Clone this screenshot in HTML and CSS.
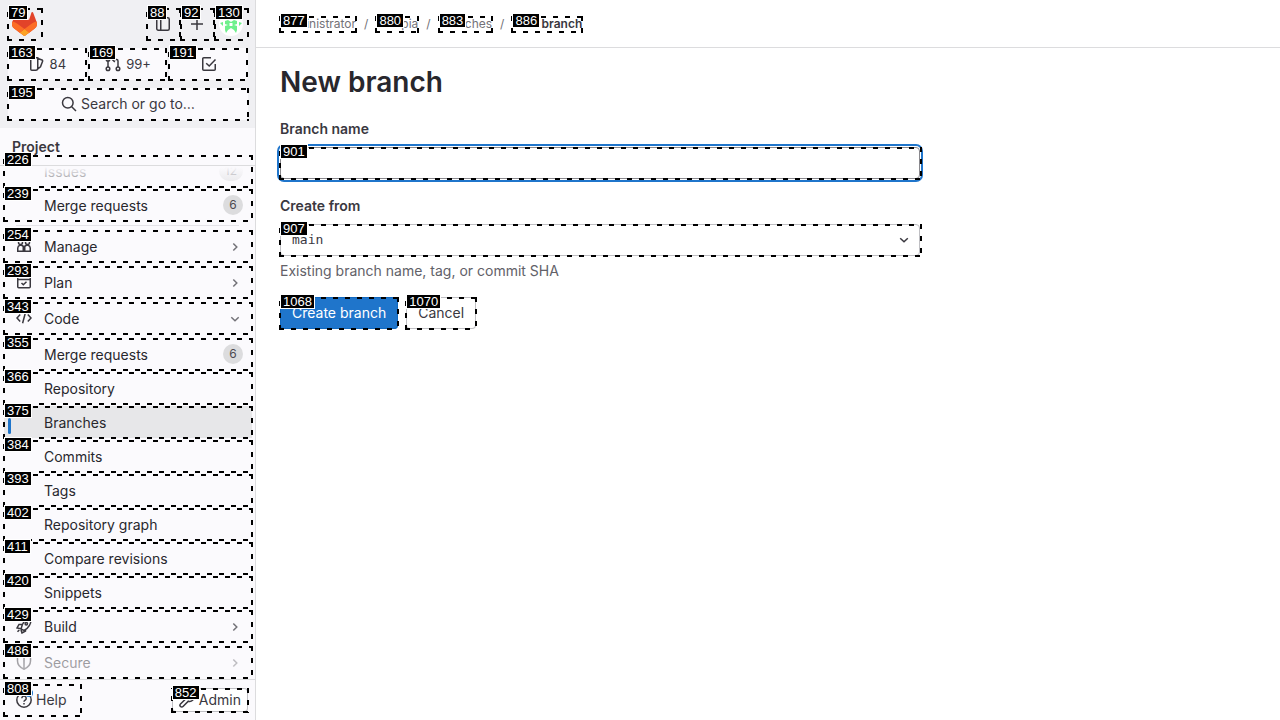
FILE: index.html
```html
<!DOCTYPE html>
<html lang="en">
<head>
<meta charset="utf-8">
<title>New branch</title>
<link rel="stylesheet" href="styles.css">
</head>
<body>
<div class="app">
  <aside class="sidebar">
    <div class="top">
      <div class="brand-row">
        <a class="logo" href="#" aria-label="Homepage">
          <svg width="25" height="24" viewBox="0 0 25 24"><path fill="#E24329" d="m24.507 9.5-.034-.09L21.082.562a.896.896 0 0 0-1.694.091l-2.29 7.01H7.825L5.535.653a.898.898 0 0 0-1.694-.09L.451 9.411.416 9.5a6.297 6.297 0 0 0 2.09 7.278l.012.01.03.022 5.16 3.867 2.56 1.935 1.554 1.176a1.051 1.051 0 0 0 1.268 0l1.555-1.176 2.56-1.935 5.197-3.89.014-.01A6.297 6.297 0 0 0 24.507 9.5Z"/><path fill="#FC6D26" d="m24.507 9.5-.034-.09a11.44 11.44 0 0 0-4.56 2.051l-7.447 5.632 4.742 3.584 5.197-3.89.014-.01A6.297 6.297 0 0 0 24.507 9.5Z"/><path fill="#FCA326" d="m7.707 20.677 2.56 1.935 1.555 1.176a1.051 1.051 0 0 0 1.268 0l1.555-1.176 2.56-1.935-4.743-3.584-4.755 3.584Z"/><path fill="#FC6D26" d="M5.01 11.461a11.43 11.43 0 0 0-4.56-2.05L.416 9.5a6.297 6.297 0 0 0 2.09 7.278l.012.01.03.022 5.16 3.867 4.745-3.584-7.444-5.632Z"/></svg>
          <span class="mark"><span class="tag">79</span></span>
        </a>
        <button class="tool" type="button" aria-label="Hide sidebar">
          <svg class="icon" viewBox="0 0 16 16"><rect x="1.75" y="1.75" width="12.5" height="12.5" rx="1.5"/><path d="M5.75 2v12"/></svg>
          <span class="mark"><span class="tag">88</span></span>
        </button>
        <button class="tool" type="button" aria-label="Create new">
          <svg class="icon" viewBox="0 0 16 16"><path d="M8 2v12M2 8h12"/></svg>
          <span class="mark"><span class="tag">92</span></span>
        </button>
        <button class="tool" type="button" aria-label="User menu">
          <svg class="avatar" width="24" height="24" viewBox="0 0 24 24"><circle cx="12" cy="12" r="12" fill="#fff"/><path fill="#6ef08c" d="M6 5h3v3H6zM15 5h3v3h-3zM6 9l3-1 3 2 3-2 3 1v3l-3 1 3 1v4h-3l-3-2-3 2H6v-4l3-1-3-1zM10.500 11v3h3v-3zM1 11l3-1v4zM23 11l-3-1v4zM6 18h3l-2 3zM18 18h-3l2 3z" fill-rule="evenodd"/></svg>
          <span class="mark"><span class="tag">130</span></span>
        </button>
      </div>
      <div class="counts">
        <a class="count" href="#" aria-label="Assigned issues 84">
          <svg class="icon" viewBox="0 0 16 16"><path d="M1.750 1.750h7v10.500a2 2 0 0 1-2 2h-4a1 1 0 0 1-1-1zM9 2.500l4 1.500a1 1 0 0 1 .6 1.300l-2.100 5.500L8.800 13"/></svg>
          <span>84</span>
          <span class="mark"><span class="tag">163</span></span>
        </a>
        <button class="count" type="button" aria-label="Merge requests 99+">
          <svg class="icon" viewBox="0 0 16 16"><circle cx="3" cy="12.8" r="1.8"/><circle cx="13" cy="12.8" r="1.8"/><circle cx="3" cy="3.2" r="1.8"/><path d="M3 5v6M8 3.5h3.5A1.5 1.5 0 0 1 13 5v6M9.8 1L7.3 3.5 9.8 6"/></svg>
          <span>99+</span>
          <span class="mark"><span class="tag">169</span></span>
        </button>
        <a class="count" href="#" aria-label="To-do list">
          <svg class="icon" viewBox="0 0 16 16"><path d="M10 1.75H2.75a1 1 0 0 0-1 1v10.5a1 1 0 0 0 1 1h10.5a1 1 0 0 0 1-1V8M5.2 7.2L8.2 10l6.3-6.5"/></svg>
          <span class="mark"><span class="tag">191</span></span>
        </a>
      </div>
      <button class="search" type="button">
        <svg class="icon" viewBox="0 0 16 16"><circle cx="6.8" cy="6.8" r="5.3"/><path d="M10.7 10.7l4.3 4.3"/></svg>
        <span>Search or go to…</span>
        <span class="mark"><span class="tag">195</span></span>
      </button>
    </div>

    <div class="context">Project</div>

    <nav class="nav" aria-label="Project">
      <a class="item" href="#"><span class="label">Issues</span><span class="badge">12</span><span class="mark"><span class="tag">226</span></span></a>
      <a class="item" href="#"><span class="label">Merge requests</span><span class="badge">6</span><span class="mark"><span class="tag">239</span></span></a>
      <hr class="rule">
      <button class="item section" type="button">
        <svg class="icon" viewBox="0 0 16 16"><circle cx="4.500" cy="4.500" r="2"/><circle cx="11.500" cy="4.500" r="2"/><path d="M1.750 13.250V10a3 3 0 0 1 5.500-1.500v4.750zM8.750 13.250V8.500A3 3 0 0 1 14.250 10v3.250zM7 8.250h2"/></svg>
        <span class="label">Manage</span><svg class="chevron" viewBox="0 0 12 12"><path d="M4.3 2.5L7.8 6 4.3 9.5"/></svg><span class="mark"><span class="tag">254</span></span>
      </button>
      <button class="item section" type="button">
        <svg class="icon" viewBox="0 0 16 16"><path d="M1.750 2.500h12.500v10.250a1 1 0 0 1-1 1H2.750a1 1 0 0 1-1-1zM2 5.500h12M5.500 9l1.800 1.700 3.200-3"/></svg>
        <span class="label">Plan</span><svg class="chevron" viewBox="0 0 12 12"><path d="M4.3 2.5L7.8 6 4.3 9.5"/></svg><span class="mark"><span class="tag">293</span></span>
      </button>
      <button class="item section" type="button">
        <svg class="icon" viewBox="0 0 16 16"><path d="M4.2 4.5L1 8l3.2 3.5M11.8 4.5L15 8l-3.2 3.5M9.4 2.8L6.6 13.2"/></svg>
        <span class="label">Code</span><svg class="chevron" viewBox="0 0 12 12"><path d="M2.3 4.3L6 7.8l3.7-3.5"/></svg><span class="mark"><span class="tag">343</span></span>
      </button>
      <a class="item" href="#"><span class="label">Merge requests</span><span class="badge">6</span><span class="mark"><span class="tag">355</span></span></a>
      <a class="item" href="#"><span class="label">Repository</span><span class="mark"><span class="tag">366</span></span></a>
      <a class="item current" href="#" aria-current="page"><span class="label">Branches</span><span class="mark"><span class="tag">375</span></span></a>
      <a class="item" href="#"><span class="label">Commits</span><span class="mark"><span class="tag">384</span></span></a>
      <a class="item" href="#"><span class="label">Tags</span><span class="mark"><span class="tag">393</span></span></a>
      <a class="item" href="#"><span class="label">Repository graph</span><span class="mark"><span class="tag">402</span></span></a>
      <a class="item" href="#"><span class="label">Compare revisions</span><span class="mark"><span class="tag">411</span></span></a>
      <a class="item" href="#"><span class="label">Snippets</span><span class="mark"><span class="tag">420</span></span></a>
      <button class="item section" type="button">
        <svg class="icon" viewBox="0 0 16 16"><path d="M15 1c-4 0-7 2-8.600 5.500L5 11l3 1.500C12 10.500 15 6 15 1zM6.500 6.500H3L1 10l4 .8M9.500 11.500V13l-3.500 2-1-3M1.500 13.800L3.300 12"/><circle cx="10.300" cy="5.700" r="1.200"/></svg>
        <span class="label">Build</span><svg class="chevron" viewBox="0 0 12 12"><path d="M4.3 2.5L7.8 6 4.3 9.500"/></svg><span class="mark"><span class="tag">429</span></span>
      </button>
      <button class="item section" type="button">
        <svg class="icon" viewBox="0 0 16 16"><path d="M8 1L1.500 3.500V7c0 4 2.500 6.500 6.500 8.200C12 13.500 14.500 11 14.500 7V3.500zM8 1v14"/></svg>
        <span class="label">Secure</span><svg class="chevron" viewBox="0 0 12 12"><path d="M4.3 2.5L7.8 6 4.3 9.500"/></svg><span class="mark"><span class="tag">486</span></span>
      </button>
    </nav>

    <div class="foot">
      <button class="help" type="button">
        <svg class="icon" viewBox="0 0 16 16"><circle cx="8" cy="8" r="7.200"/><path d="M5.800 6.200a2.200 2.200 0 1 1 3.400 1.900C8.400 8.600 8 8.900 8 9.700M8 11v1.500"/></svg>
        <span class="dot"></span>
        <span>Help</span>
        <span class="mark"><span class="tag">808</span></span>
      </button>
      <a class="admin" href="#">
        <svg class="icon" viewBox="0 0 16 16"><path d="M12 1.300a4.200 4.200 0 0 0-5.200 5.500L1.500 12a1.700 1.700 0 0 0 2.500 2.500l5.300-5.300A4.200 4.200 0 0 0 14.700 4L12.200 6.300 9.900 6l-.3-2.300z"/></svg>
        <span>Admin</span>
        <span class="mark"><span class="tag">852</span></span>
      </a>
    </div>
  </aside>

  <div class="page">
    <header class="bar">
      <nav class="crumbs" aria-label="Breadcrumbs">
        <a href="#">Administrator<span class="mark"><span class="tag">877</span></span></a><span>/</span>
        <a href="#">Sinopia<span class="mark"><span class="tag">880</span></span></a><span>/</span>
        <a href="#">Branches<span class="mark"><span class="tag">883</span></span></a><span>/</span>
        <a class="here" href="#">New branch<span class="mark"><span class="tag">886</span></span></a>
      </nav>
    </header>
    <main class="content">
      <h1>New branch</h1>
      <form class="form">
        <label for="branch">Branch name</label>
        <div class="field">
          <input class="control focus" id="branch" type="text">
          <span class="mark"><span class="tag">901</span></span>
        </div>
        <label for="source">Create from</label>
        <div class="field source">
          <select class="control" id="source"><option>main</option></select>
          <svg class="arrow" width="16" height="16" viewBox="0 0 16 16"><path d="M4.200 6.200L8 9.800l3.800-3.600"/></svg>
          <span class="mark"><span class="tag">907</span></span>
        </div>
        <p class="hint">Existing branch name, tag, or commit SHA</p>
        <div class="actions">
          <button class="btn primary" type="submit">Create branch<span class="mark"><span class="tag">1068</span></span></button>
          <a class="btn" href="#">Cancel<span class="mark"><span class="tag">1070</span></span></a>
        </div>
      </form>
    </main>
  </div>
</div>
</body>
</html>
```

FILE: styles.css
```css
* { box-sizing: border-box; }
body {
  margin: 0;
  font: 14px/20px Inter, "Noto Sans", sans-serif;
  color: #28272d;
  background: #fff;
}
a { color: inherit; text-decoration: none; }
button, input, select { font: inherit; color: inherit; margin: 0; }
button { border: 0; background: none; padding: 0; text-align: left; }

.app { display: flex; min-height: 100vh; }

/* Numbered outlines laid over each interactive element */
.mark {
  position: absolute;
  inset: 0 -1px -1px;
  background:
    repeating-linear-gradient(90deg, #0000 0 6px, #000 6px 11px, #0000 11px 12px) 0 0 / 100% 2px no-repeat,
    repeating-linear-gradient(90deg, #000 0 5px, #0000 5px 12px) 0 100% / 100% 2px no-repeat,
    repeating-linear-gradient(0deg, #000 0 5px, #0000 5px 12px) 0 0 / 2px 100% no-repeat,
    repeating-linear-gradient(180deg, #000 0 5px, #0000 5px 12px) 100% 0 / 2px 100% no-repeat;
  z-index: 5;
  pointer-events: none;
}
.tag {
  position: absolute;
  left: 1px;
  top: -3px;
  padding: 0 2px;
  border: 1px solid #fff;
  background: #000;
  color: #fff;
  font: 13px/13px "Liberation Sans", Arial, sans-serif;
}

.icon {
  width: 16px;
  height: 16px;
  flex: none;
  fill: none;
  stroke: #3a383f;
  stroke-width: 1.5;
}

.sidebar {
  width: 256px;
  height: 100vh;
  flex: none;
  display: flex;
  flex-direction: column;
  background: #fbfafd;
  border-right: 1px solid #dcdcde;
}
.top {
  flex: none;
  display: flex;
  flex-direction: column;
  gap: 8px;
  padding: 8px 7px 8px 8px;
  background: #f0f0f3;
}
.brand-row { display: flex; }
.logo, .tool {
  position: relative;
  display: flex;
  align-items: center;
  justify-content: center;
  height: 32px;
}
.logo { width: 34px; margin-right: auto; justify-content: flex-start; padding-left: 4px; }
.tool { width: 34px; }
.tool .mark { left: 0; }
.counts { display: grid; grid-template-columns: repeat(3, 1fr); gap: 2px; }
.count, .search {
  position: relative;
  display: flex;
  align-items: center;
  justify-content: center;
  gap: 5px;
  height: 32px;
  border-radius: 4px;
  background: #fbfafd;
  color: #3a383f;
}
.count { font-size: 13px; }
.count .mark { right: 0; }
.search { gap: 4px; }

.context {
  position: relative;
  z-index: 2;
  flex: none;
  height: 38px;
  padding: 9px 12px;
  border-bottom: 1px solid #dcdcde;
  background: #fbfafd;
  color: #3a383f;
  font-weight: 600;
}
.nav {
  position: relative;
  flex: 1;
  min-height: 0;
  display: flex;
  flex-direction: column;
  margin-top: -11px;
  padding: 0 3px 0 4px;
}
.nav::before, .nav::after {
  content: "";
  position: absolute;
  left: 0;
  right: 0;
  z-index: 1;
}
.nav::before { top: 0; height: 40px; background: linear-gradient(#fbfafd 30%, #fbfafd00); }
.nav::after { bottom: 0; height: 36px; background: linear-gradient(#fbfafd60, #fbfafdb0); }
.item {
  position: relative;
  flex: none;
  display: flex;
  align-items: center;
  height: 32px;
  margin-bottom: 2px;
  padding: 0 9px 0 40px;
}
.section { margin-bottom: 4px; padding: 0 11px 0 12px; gap: 12px; }
.section:last-child { margin-bottom: 0; }
.label { flex: 1; padding-top: 2px; }
.badge {
  min-width: 20px;
  padding: 2px 6px;
  border-radius: 10px;
  background: #dcdcde;
  color: #4c4b51;
  font-size: 12px;
  line-height: 16px;
  text-align: center;
}
.chevron { width: 12px; height: 12px; margin-top: 2px; fill: none; stroke: #737278; stroke-width: 1.5; }
.rule { width: 223px; flex: none; margin: 2px 12px 4px; border: 0; border-top: 1px solid #e4e3e8; }
.current { background: #e7e7e9; }
.current::before {
  content: "";
  position: absolute;
  left: 4px;
  top: 12px;
  width: 3px;
  height: 16px;
  border-radius: 3px;
  background: #1f75cb;
}

.foot {
  flex: none;
  display: flex;
  align-items: center;
  justify-content: space-between;
  height: 41px;
  padding: 0 7px 0 4px;
  border-top: 1px solid #dcdcde;
  color: #3a383f;
}
.help, .admin { position: relative; display: flex; align-items: center; gap: 4px; }
.help { height: 32px; padding: 0 14px 0 12px; }
.dot { position: absolute; left: 21px; top: 5px; width: 8px; height: 8px; border-radius: 50%; background: #1f75cb; }
.admin { height: 24px; padding: 0 7px; border-radius: 4px; background: #fff; box-shadow: inset 0 0 0 1px #bfbfc3; }

.page { flex: 1; min-width: 0; }
.bar { height: 48px; padding: 16px 24px 0; border-bottom: 1px solid #dcdcde; }
.crumbs { display: flex; gap: 8px; color: #737278; font-size: 12px; line-height: 16px; }
.crumbs a { position: relative; }
.crumbs .here { color: #3a383f; font-weight: 600; }
.content { padding: 16px 24px; }
h1 { margin: 0 0 19px; font-size: 28px; line-height: 36px; font-weight: 600; }
.form { max-width: 640px; }
label { display: block; margin-bottom: 8px; color: #3a383f; font-weight: 600; }
.field { position: relative; margin-bottom: 17px; }
.field .mark { right: -2px; }
.control {
  display: block;
  width: 100%;
  height: 32px;
  padding: 0 11px;
  border: 1px solid #bfbfc3;
  border-radius: 4px;
  background: #fff;
  appearance: none;
  outline: 0;
}
.focus { border-color: #89888d; box-shadow: 0 0 0 1px #fff, 0 0 0 3px #1f75cb; }
.source { margin-bottom: 5px; }
.source .control { font: 13px/20px "DejaVu Sans Mono", monospace; color: #3a383f; }
.arrow { position: absolute; right: 8px; top: 8px; fill: none; stroke: #3a383f; stroke-width: 1.5; }
.hint { margin: 0 0 16px; color: #626168; }
.actions { display: flex; gap: 8px; }
.btn {
  position: relative;
  height: 32px;
  padding: 6px 12px;
  border-radius: 4px;
  box-shadow: inset 0 0 0 1px #bfbfc3;
  color: #3a383f;
}
.primary { background: #1f75cb; color: #fff; box-shadow: inset 0 0 0 1px #1068bf; }
```
